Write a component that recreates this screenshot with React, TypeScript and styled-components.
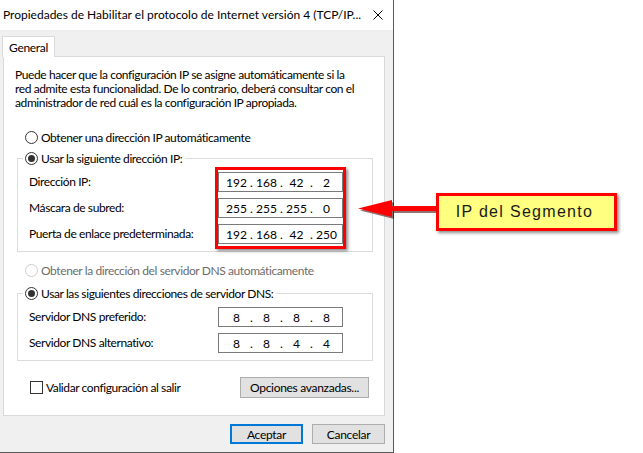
import React from 'react';
import styled, { createGlobalStyle, css } from 'styled-components';

const GlobalStyle = createGlobalStyle`
  html, body {
    margin: 0;
    background: #ffffff;
  }
  body {
    font-family: Lato, "Liberation Sans", Arial, sans-serif;
    font-size: 12px;
    color: #000000;
  }
`;

const Page = styled.div`
  position: relative;
  display: flex;
  width: 643px;
  height: 453px;
  overflow: hidden;
`;

const Window = styled.div`
  display: flex;
  flex-direction: column;
  width: 393px;
  height: 452px;
  background: #f0f0f0;
  border-right: 1px solid #5a5a5a;
  border-bottom: 1px solid #5a5a5a;
`;

const TitleBar = styled.div`
  display: flex;
  align-items: center;
  justify-content: space-between;
  height: 30px;
  padding: 0 10px 0 3px;
  background: #ffffff;
  white-space: nowrap;
`;

const Title = styled.span`
  font-size: 12px;
  line-height: 16px;
`;

const Body = styled.div`
  display: flex;
  flex-direction: column;
  flex: 1;
  padding: 6px 8px 0 3px;
`;

const TabStrip = styled.div`
  display: flex;
  position: relative;
  z-index: 1;
`;

const Tab = styled.div`
  box-sizing: border-box;
  height: 21px;
  margin-left: -1px;
  padding: 0 6px;
  display: flex;
  align-items: center;
  background: #ffffff;
  border: 1px solid #d9d9d9;
  border-bottom: none;
  letter-spacing: -0.3px;
`;

const Panel = styled.div`
  box-sizing: border-box;
  margin-top: -1px;
  height: 360px;
  padding: 11px 11px 0 11px;
  background: #ffffff;
  border: 1px solid #d9d9d9;
  display: flex;
  flex-direction: column;
  white-space: nowrap;
  letter-spacing: -0.4px;
`;

const Description = styled.p`
  margin: 0;
  line-height: 14px;
`;

const RadioRow = styled.label<{ disabled?: boolean; gap?: number }>`
  display: flex;
  align-items: center;
  height: 16px;
  margin: ${p => p.gap ?? 0}px 0 0 10px;
  color: ${p => (p.disabled ? '#6d6d6d' : '#000000')};
`;

const RadioDot = styled.span<{ checked?: boolean; disabled?: boolean }>`
  box-sizing: border-box;
  width: 13px;
  height: 13px;
  margin-right: 3px;
  border-radius: 50%;
  border: 1px solid ${p => (p.disabled ? '#cccccc' : '#333333')};
  background: #ffffff;
  position: relative;
  flex: none;
  ${p =>
    p.checked &&
    css`
      &::after {
        content: '';
        position: absolute;
        left: 2px;
        top: 2px;
        width: 7px;
        height: 7px;
        border-radius: 50%;
        background: #333333;
      }
    `}
`;

const Group = styled.fieldset<{ gap: number; bottom: number }>`
  margin: ${p => p.gap}px 0 0 2px;
  padding: 0 0 ${p => p.bottom}px 0;
  border: 1px solid #dcdcdc;
  min-width: 0;
`;

const Legend = styled.legend`
  margin-left: 5px;
  padding: 0 3px 0 2px;
  display: flex;
  align-items: center;
  height: 16px;
`;

const GroupBody = styled.div<{ top: number }>`
  display: flex;
  padding: ${p => p.top}px 0 0 11px;
`;

const Labels = styled.div<{ width: number; offset: number }>`
  display: flex;
  flex-direction: column;
  gap: 6px;
  width: ${p => p.width}px;
  padding-top: ${p => p.offset}px;
`;

const Label = styled.div`
  height: 20px;
  line-height: 20px;
`;

const Fields = styled.div`
  display: flex;
  flex-direction: column;
  gap: 6px;
`;

const Highlight = styled(Fields)`
  padding: 2px 0;
  border: 3px solid #ff0000;
  box-shadow: 2px 2px 3px rgba(0, 0, 0, 0.45);
`;

const Field = styled.div`
  box-sizing: border-box;
  display: flex;
  align-items: center;
  width: 125px;
  height: 20px;
  padding-left: 6px;
  border: 1px solid #7a7a7a;
  background: #ffffff;
  letter-spacing: 0;
`;

const Octet = styled.span`
  width: 23px;
  text-align: center;
`;

const Dot = styled.span`
  width: 7px;
  text-align: center;
`;

const BottomRow = styled.div`
  display: flex;
  align-items: center;
  justify-content: space-between;
  margin: 16px 4px 0 15px;
`;

const Check = styled.label`
  display: flex;
  align-items: center;
`;

const CheckBox = styled.span`
  box-sizing: border-box;
  width: 13px;
  height: 13px;
  margin-right: 3px;
  border: 1px solid #333333;
  background: #ffffff;
`;

const Button = styled.button<{ primary?: boolean; width: number }>`
  box-sizing: border-box;
  width: ${p => p.width}px;
  height: ${p => (p.primary !== undefined ? 20 : 21)}px;
  padding: 0;
  font: inherit;
  letter-spacing: -0.3px;
  color: #000000;
  background: #e1e1e1;
  border: ${p => (p.primary ? '2px solid #0078d7' : '1px solid #adadad')};
`;

const Footer = styled.div`
  display: flex;
  justify-content: flex-end;
  gap: 9px;
  padding: 8px 0 0 0;
`;

const Callout = styled.div`
  position: absolute;
  left: 357px;
  top: 193px;
  display: flex;
  align-items: flex-start;
`;

const CalloutLabel = styled.div`
  box-sizing: border-box;
  width: 181px;
  height: 38px;
  display: flex;
  align-items: center;
  justify-content: center;
  padding-right: 4px;
  background: #ffff80;
  border: 3px solid #ff0000;
  box-shadow: 2px 2px 3px rgba(0, 0, 0, 0.45);
  font-family: "Liberation Sans", Arial, sans-serif;
  font-size: 16px;
  letter-spacing: 1.3px;
  color: #1a1a1a;
`;

const ipRows = [
  { label: 'Dirección IP:', value: ['192', '168', '42', '2'] },
  { label: 'Máscara de subred:', value: ['255', '255', '255', '0'] },
  { label: 'Puerta de enlace predeterminada:', value: ['192', '168', '42', '250'] },
];

const dnsRows = [
  { label: 'Servidor DNS preferido:', value: ['8', '8', '8', '8'] },
  { label: 'Servidor DNS alternativo:', value: ['8', '8', '4', '4'] },
];

const IpField = ({ value }: { value: string[] }) => (
  <Field>
    {value.map((o, i) => (
      <React.Fragment key={i}>
        {i > 0 && <Dot>.</Dot>}
        <Octet>{o}</Octet>
      </React.Fragment>
    ))}
  </Field>
);

const CloseIcon = () => (
  <svg width="10" height="10" viewBox="0 0 10 10">
    <path d="M0.5 0.5 L9.5 9.5 M9.5 0.5 L0.5 9.5" stroke="#000" strokeWidth="1" />
  </svg>
);

const Arrow = () => (
  <svg width="79" height="24" viewBox="0 0 79 24" style={{ marginTop: 4 }}>
    <g fill="#3a0000" opacity="0.55" transform="translate(2 2)">
      <polygon points="1,11.5 35,3 35,20" />
      <rect x="33" y="9" width="45" height="5" />
    </g>
    <g fill="#ff0000">
      <polygon points="1,11.5 35,3 35,20" />
      <rect x="33" y="9" width="46" height="5" />
    </g>
  </svg>
);

export default function App() {
  return (
    <Page>
      <GlobalStyle />
      <Window>
        <TitleBar>
          <Title>Propiedades de Habilitar el protocolo de Internet versión 4 (TCP/IP...</Title>
          <CloseIcon />
        </TitleBar>
        <Body>
          <TabStrip>
            <Tab>General</Tab>
          </TabStrip>
          <Panel>
            <Description>
              Puede hacer que la configuración IP se asigne automáticamente si la
              <br />
              red admite esta funcionalidad. De lo contrario, deberá consultar con el
              <br />
              administrador de red cuál es la configuración IP apropiada.
            </Description>

            <RadioRow gap={19}>
              <RadioDot />
              Obtener una dirección IP automáticamente
            </RadioRow>

            <Group gap={5} bottom={2}>
              <Legend>
                <RadioDot checked />
                Usar la siguiente dirección IP:
              </Legend>
              <GroupBody top={1}>
                <Labels width={186} offset={5}>
                  {ipRows.map(r => (
                    <Label key={r.label}>{r.label}</Label>
                  ))}
                </Labels>
                <Highlight>
                  {ipRows.map(r => (
                    <IpField key={r.label} value={r.value} />
                  ))}
                </Highlight>
              </GroupBody>
            </Group>

            <RadioRow gap={10} disabled>
              <RadioDot disabled />
              Obtener la dirección del servidor DNS automáticamente
            </RadioRow>

            <Group gap={7} bottom={7}>
              <Legend>
                <RadioDot checked />
                Usar las siguientes direcciones de servidor DNS:
              </Legend>
              <GroupBody top={6}>
                <Labels width={189} offset={0}>
                  {dnsRows.map(r => (
                    <Label key={r.label}>{r.label}</Label>
                  ))}
                </Labels>
                <Fields>
                  {dnsRows.map(r => (
                    <IpField key={r.label} value={r.value} />
                  ))}
                </Fields>
              </GroupBody>
            </Group>

            <BottomRow>
              <Check>
                <CheckBox />
                Validar configuración al salir
              </Check>
              <Button width={129}>Opciones avanzadas...</Button>
            </BottomRow>
          </Panel>
          <Footer>
            <Button primary width={73}>Aceptar</Button>
            <Button primary={false} width={73}>Cancelar</Button>
          </Footer>
        </Body>
      </Window>
      <Callout>
        <Arrow />
        <CalloutLabel>IP del Segmento</CalloutLabel>
      </Callout>
    </Page>
  );
}
